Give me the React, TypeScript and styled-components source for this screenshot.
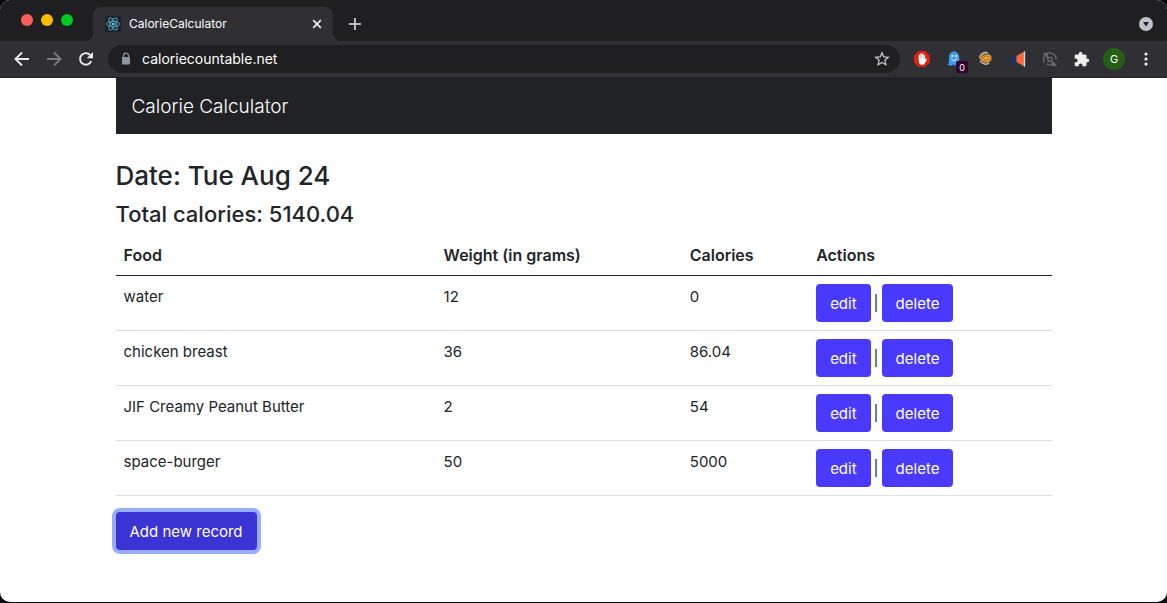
import React from 'react';
import styled, { createGlobalStyle, css } from 'styled-components';

const GlobalStyle = createGlobalStyle`
  *, *::before, *::after { box-sizing: border-box; }
  body {
    margin: 0;
    background: #05090c;
    color: #212529;
    font-family: Inter, 'Liberation Sans', sans-serif;
    font-size: 15px;
    line-height: 24px;
  }
  button, input { font: inherit; }
`;

const BrowserWindow = styled.div`
  display: flex;
  flex-direction: column;
  min-height: calc(100vh - 1px);
  border-radius: 10px;
  overflow: hidden;
  background: #fff;
`;

const TabStrip = styled.header`
  display: flex;
  align-items: flex-end;
  height: 41px;
  background: #1f1f22;
  color: #fff;
`;

const TrafficLights = styled.div`
  display: flex;
  align-self: flex-start;
  gap: 8px;
  width: 93px;
  padding: 14px 0 0 21px;
`;

const Light = styled.span<{ $color: string }>`
  width: 12px;
  height: 12px;
  border-radius: 50%;
  background: ${(p) => p.$color};
`;

const Tab = styled.div`
  position: relative;
  display: flex;
  align-items: center;
  width: 240px;
  height: 34px;
  padding: 0 8px 0 12px;
  border-radius: 8px 8px 0 0;
  background: #303034;
  font-size: 12px;

  &::before, &::after {
    content: '';
    position: absolute;
    bottom: 0;
    width: 8px;
    height: 8px;
  }
  &::before {
    left: -8px;
    background: radial-gradient(circle at 0 0, transparent 8px, #303034 8px);
  }
  &::after {
    right: -8px;
    background: radial-gradient(circle at 100% 0, transparent 8px, #303034 8px);
  }
`;

const TabTitle = styled.span`
  flex: 1;
  margin-left: 8px;
`;

const IconButton = styled.button`
  display: flex;
  align-items: center;
  justify-content: center;
  flex: none;
  width: 16px;
  height: 16px;
  padding: 0;
  border: 0;
  background: none;
  color: #eeeef0;

  &:disabled { color: #7c7c80; }
`;

const StripActions = styled.div`
  display: flex;
  flex: 1;
  align-items: center;
  justify-content: space-between;
  height: 34px;
  padding: 0 13px 0 14px;
`;

const Toolbar = styled.nav`
  display: flex;
  align-items: center;
  height: 37px;
  padding: 0 13px 0 14px;
  border-bottom: 1px solid #232326;
  background: #303034;
  color: #fff;
`;

const NavButtons = styled.div`
  display: flex;
  gap: 16px;
  margin-right: 14px;
`;

const AddressBar = styled.label`
  display: flex;
  flex: 1;
  align-items: center;
  gap: 8px;
  min-width: 0;
  height: 28px;
  padding: 0 10px;
  border-radius: 14px;
  background: #1f1f22;
`;

const AddressInput = styled.input`
  flex: 1;
  min-width: 0;
  padding: 0;
  border: 0;
  outline: 0;
  background: none;
  color: #fff;
  font-size: 14px;
`;

const Extensions = styled.div`
  display: flex;
  align-items: center;
  gap: 16px;
  margin-left: 14px;
`;

const ExtensionButton = styled(IconButton)`
  position: relative;
`;

const Badge = styled.span`
  position: absolute;
  top: 10px;
  left: 10px;
  width: 12px;
  height: 12px;
  border-radius: 2px;
  background: #33002e;
  color: #fff;
  font-size: 9px;
  line-height: 13px;
`;

const Avatar = styled.button`
  width: 22px;
  height: 22px;
  margin: 0 -3px;
  padding: 0;
  border: 0;
  border-radius: 50%;
  background: #245f14;
  color: #fff;
  font-size: 11px;
  line-height: 22px;
`;

const Container = styled.main`
  width: 100%;
  max-width: 960px;
  margin: 0 auto;
  padding: 0 12px;
`;

const Navbar = styled.nav`
  display: flex;
  align-items: center;
  height: 56px;
  padding: 2px 16px 0;
  background: #212226;
`;

const Brand = styled.a`
  color: #fff;
  font-size: 19px;
  font-weight: 300;
  text-decoration: none;
`;

const Heading = styled.h1`
  margin: 24px 0 6px;
  font-size: 26px;
  font-weight: 500;
  line-height: 35px;
`;

const Subheading = styled.h2`
  margin: 0 0 6px;
  font-size: 22px;
  font-weight: 500;
  line-height: 30px;
`;

const Table = styled.table`
  width: 100%;
  margin-bottom: 16px;
  border-collapse: separate;
  border-spacing: 0;
  table-layout: fixed;
`;

const HeaderCell = styled.th<{ $width: string }>`
  width: ${(p) => p.$width};
  padding: 8px;
  border-bottom: 1px solid #212529;
  font-size: 16px;
  font-weight: 600;
  text-align: left;
`;

const Cell = styled.td`
  height: 55px;
  padding: 8px;
  border-bottom: 1px solid #dcdee3;
  line-height: 26px;
  vertical-align: top;
`;

const RowActions = styled.div`
  display: flex;
  align-items: center;
  gap: 3px;
`;

const Button = styled.button<{ $focused?: boolean }>`
  height: 38px;
  padding: 2px 14px 0;
  border: 0;
  border-radius: 4px;
  background: #4a3aff;
  color: #fff;

  ${(p) => p.$focused && css`
    background: #3c33d5;
    box-shadow: 0 0 0 4px #98aefd;
  `}
`;

const ReactLogo = () => (
  <svg width="16" height="16" viewBox="0 0 16 16" aria-hidden="true">
    <rect width="16" height="16" rx="1" fill="#202124" />
    <g fill="none" stroke="#4d9fbb" strokeWidth="1">
      <ellipse cx="8" cy="8" rx="6.6" ry="2.6" />
      <ellipse cx="8" cy="8" rx="6.6" ry="2.6" transform="rotate(60 8 8)" />
      <ellipse cx="8" cy="8" rx="6.6" ry="2.6" transform="rotate(120 8 8)" />
    </g>
    <circle cx="8" cy="8" r="1.3" fill="#61dafb" />
  </svg>
);

const CloseIcon = () => (
  <svg width="16" height="16" viewBox="0 0 16 16" stroke="currentColor" strokeWidth="1.7" aria-hidden="true">
    <path d="M4.2 4.2l7.6 7.6M11.8 4.2l-7.6 7.6" />
  </svg>
);

const PlusIcon = () => (
  <svg width="16" height="16" viewBox="0 0 16 16" stroke="#b9bac0" strokeWidth="2" aria-hidden="true">
    <path d="M8 2v12M2 8h12" />
  </svg>
);

const ChevronBadge = () => (
  <svg width="16" height="16" viewBox="0 0 16 16" aria-hidden="true">
    <circle cx="8" cy="8" r="7" fill="#bfc0c8" />
    <path d="M5 6h6L8 10.5z" fill="#1f1f22" />
  </svg>
);

const ArrowIcon = ({ flip }: { flip?: boolean }) => (
  <svg width="16" height="16" viewBox="0 0 16 16" fill="none" stroke="currentColor" strokeWidth="1.8" aria-hidden="true">
    <path d={flip ? 'M1 8h13M8 1.5L14.5 8 8 14.5' : 'M15 8H2M8 1.5L1.5 8 8 14.5'} />
  </svg>
);

const ReloadIcon = () => (
  <svg width="16" height="16" viewBox="0 0 16 16" aria-hidden="true">
    <path d="M13.2 10.2A5.8 5.8 0 1 1 12.2 4" fill="none" stroke="currentColor" strokeWidth="1.9" />
    <path d="M15 1v6.2H8.8z" fill="currentColor" />
  </svg>
);

const LockIcon = () => (
  <svg width="16" height="16" viewBox="0 0 16 16" aria-hidden="true">
    <rect x="4" y="6" width="8" height="7.5" rx="1" fill="#9294a0" />
    <path d="M5.5 6.5V4.7a2.5 2.5 0 0 1 5 0v1.8" fill="none" stroke="#9294a0" strokeWidth="1.2" />
  </svg>
);

const StarIcon = () => (
  <svg width="16" height="16" viewBox="0 0 16 16" fill="none" stroke="#c6c7cc" strokeWidth="1.3" aria-hidden="true">
    <path d="M8 1.8l1.8 4.1 4.5.4-3.4 3 1 4.4L8 11.4l-3.9 2.3 1-4.4-3.4-3 4.5-.4z" />
  </svg>
);

const HandIcon = () => (
  <svg width="16" height="16" viewBox="0 0 16 16" aria-hidden="true">
    <path d="M4.7 0h6.6L16 4.7v6.6L11.3 16H4.7L0 11.3V4.7z" fill="#dc2116" />
    <path d="M5.4 8V4.3M7.1 7V3M8.8 7V3.3M10.5 8V4.8" stroke="#fff" strokeWidth="1.4" strokeLinecap="round" />
    <path d="M4.7 7h6.5v2.2l1-1.3c.8-.2 1 .3.7.8l-2.4 4c-1 1.4-3.8 1.4-4.8 0-.8-1.1-1-3-1-4.700z" fill="#fff" />
  </svg>
);

const GhostIcon = () => (
  <svg width="16" height="16" viewBox="0 0 16 16" aria-hidden="true">
    <path d="M3 6.5C3 3 4.900.5 8 .5s5.200 2.500 5.200 6v8.200l-2-1.200-2 1.300-2-1.300-2 1.300L1.500 14C2.800 13.200 3 11 3 9z" fill="#3d9cf5" />
    <circle cx="6.3" cy="5" r="1" fill="#fff" />
    <circle cx="10" cy="5" r="1" fill="#fff" />
    <path d="M5.4 7.5c1 2.500 4.500 2.500 5.500 0" fill="none" stroke="#fff" />
  </svg>
);

const CookieIcon = () => (
  <svg width="16" height="16" viewBox="0 0 16 16" aria-hidden="true">
    <ellipse cx="7.5" cy="7" rx="6.4" ry="5.7" fill="#8a6a4a" transform="rotate(20 7.5 7)" />
    <path d="M1.5 7C1.5 3.5 5.5.8 9.5 1.5M2 10c2 3 6 4.2 9 2.3" fill="none" stroke="#cdbfa8" strokeWidth="1.3" />
    <path d="M3.5 6.5C6 3.500 9 3 12.500 4.500L13 8l-3 3.300-4-.6L2.800 9z" fill="#f09c24" />
    <path d="M4.500 7.500l3-2.500 3 .5M6 9.300l4-.8 1.500-2" fill="none" stroke="#7a4c1c" strokeWidth=".6" />
    <path d="M7 7.500l2.500-.6" stroke="#ffd178" />
  </svg>
);

const MegaphoneIcon = () => (
  <svg width="16" height="16" viewBox="0 0 16 16" aria-hidden="true">
    <path d="M0 7.500L2.500 5H7v6H6l.8 3.500L4 15l-1.500-4L0 9.500z" fill="#1b3263" />
    <path d="M6.500 5L14 .8v14.400l-7.500-4.200z" fill="#f9693a" />
    <path d="M14.500.3v15.400" stroke="#cfd8e6" strokeWidth="1.300" />
  </svg>
);

const SyncOffIcon = () => (
  <svg width="16" height="16" viewBox="0 0 16 16" fill="none" stroke="#6b6b6d" strokeWidth="1.3" aria-hidden="true">
    <path d="M2.500 11.500A6.300 6.300 0 0 1 7.500 1.800c2 0 3.500.7 4.700 2a6.300 6.300 0 0 1 2.100 4.700M13 12a6.300 6.300 0 0 1-8.500.8" />
    <path d="M1.500 2.500l4 .2-.3 3.800M14.500 14.500l-4.300-.2.2-3.800" />
    <path d="M2 3l3.500 3.500M10.500 11l3 3" />
    <circle cx="8" cy="8.3" r="2.2" />
  </svg>
);

const PuzzleIcon = () => (
  <svg width="16" height="16" viewBox="1 0 23 23" fill="#f0f0f2" aria-hidden="true">
    <path d="M20.5 11H19V7c0-1.1-.9-2-2-2h-4V3.5a2.5 2.5 0 0 0-5 0V5H4c-1.1 0-2 .9-2 2v3.8h1.5a2.7 2.7 0 0 1 0 5.4H2V20c0 1.1.9 2 2 2h3.8v-1.5a2.7 2.7 0 0 1 5.4 0V22H17c1.1 0 2-.9 2-2v-4h1.5a2.5 2.5 0 0 0 0-5z" />
  </svg>
);

const DotsIcon = () => (
  <svg width="16" height="16" viewBox="0 0 16 16" fill="#f0f0f2" aria-hidden="true">
    <circle cx="8" cy="3" r="1.6" />
    <circle cx="8" cy="8" r="1.6" />
    <circle cx="8" cy="13" r="1.6" />
  </svg>
);

const extensions = [
  { name: 'Ad blocker', icon: <HandIcon /> },
  { name: 'Tracker blocker', icon: <GhostIcon />, count: 0 },
  { name: 'Cookies', icon: <CookieIcon /> },
  { name: 'Announcements', icon: <MegaphoneIcon /> },
  { name: 'Sync off', icon: <SyncOffIcon /> },
  { name: 'Extensions', icon: <PuzzleIcon /> },
];

const columns = [
  { label: 'Food', width: '34.2%' },
  { label: 'Weight (in grams)', width: '26.3%' },
  { label: 'Calories', width: '13.5%' },
  { label: 'Actions', width: '26%' },
];

const records = [
  { food: 'water', weight: 12, calories: 0 },
  { food: 'chicken breast', weight: 36, calories: 86.04 },
  { food: 'JIF Creamy Peanut Butter', weight: 2, calories: 54 },
  { food: 'space-burger', weight: 50, calories: 5000 },
];

const total = records.reduce((sum, r) => sum + r.calories, 0);

export default function App() {
  return (
    <>
      <GlobalStyle />
      <BrowserWindow>
        <TabStrip>
          <TrafficLights>
            <Light $color="#ff5f57" />
            <Light $color="#f9bd00" />
            <Light $color="#00ca25" />
          </TrafficLights>
          <Tab>
            <ReactLogo />
            <TabTitle>CalorieCalculator</TabTitle>
            <IconButton aria-label="Close tab"><CloseIcon /></IconButton>
          </Tab>
          <StripActions>
            <IconButton aria-label="New tab"><PlusIcon /></IconButton>
            <IconButton aria-label="Search tabs"><ChevronBadge /></IconButton>
          </StripActions>
        </TabStrip>
        <Toolbar>
          <NavButtons>
            <IconButton aria-label="Back"><ArrowIcon /></IconButton>
            <IconButton aria-label="Forward" disabled><ArrowIcon flip /></IconButton>
            <IconButton aria-label="Reload"><ReloadIcon /></IconButton>
          </NavButtons>
          <AddressBar>
            <LockIcon />
            <AddressInput aria-label="Address" defaultValue="caloriecountable.net" />
            <IconButton aria-label="Bookmark"><StarIcon /></IconButton>
          </AddressBar>
          <Extensions>
            {extensions.map((e) => (
              <ExtensionButton key={e.name} aria-label={e.name}>
                {e.icon}
                {e.count !== undefined && <Badge>{e.count}</Badge>}
              </ExtensionButton>
            ))}
            <Avatar>G</Avatar>
            <IconButton aria-label="Menu"><DotsIcon /></IconButton>
          </Extensions>
        </Toolbar>
        <Container>
          <Navbar>
            <Brand href="#">Calorie Calculator</Brand>
          </Navbar>
          <Heading>Date: Tue Aug 24</Heading>
          <Subheading>Total calories: {total.toFixed(2)}</Subheading>
          <Table>
            <thead>
              <tr>
                {columns.map((c) => (
                  <HeaderCell key={c.label} $width={c.width}>{c.label}</HeaderCell>
                ))}
              </tr>
            </thead>
            <tbody>
              {records.map((r) => (
                <tr key={r.food}>
                  <Cell>{r.food}</Cell>
                  <Cell>{r.weight}</Cell>
                  <Cell>{r.calories}</Cell>
                  <Cell>
                    <RowActions>
                      <Button>edit</Button>
                      <span>|</span>
                      <Button>delete</Button>
                    </RowActions>
                  </Cell>
                </tr>
              ))}
            </tbody>
          </Table>
          <Button $focused>Add new record</Button>
        </Container>
      </BrowserWindow>
    </>
  );
}
